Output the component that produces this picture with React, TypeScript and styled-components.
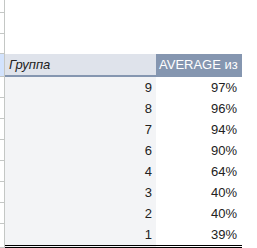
import styled, { createGlobalStyle } from 'styled-components';

const GlobalStyle = createGlobalStyle`
  html, body {
    margin: 0;
    padding: 0;
    background: #ffffff;
  }
  body {
    font-family: "Liberation Sans", Arial, sans-serif;
    font-size: 13px;
    color: #222222;
  }
`;

const Sheet = styled.div`
  display: flex;
  flex-direction: column;
  width: 257px;
  height: 248px;
  overflow: hidden;
`;

const Row = styled.div<{ $height: number }>`
  display: grid;
  grid-template-columns: 5px 151px 86px;
  height: ${(p) => p.$height}px;
`;

const RowHead = styled.div<{ $active?: boolean }>`
  box-sizing: border-box;
  border-right: 1px solid #c4c7c5;
  border-bottom: 1px solid #c4c7c5;
  background: ${(p) => (p.$active ? '#d3e3fd' : '#ffffff')};
`;

const HeaderCell = styled.div<{ $accent?: boolean }>`
  display: flex;
  align-items: center;
  padding: 0 3px;
  box-sizing: border-box;
  white-space: nowrap;
  overflow: hidden;
  border-bottom: 2px solid #8596b0;
  background: ${(p) => (p.$accent ? '#8596b0' : '#dfe3eb')};
  color: ${(p) => (p.$accent ? '#ffffff' : '#222222')};
  font-style: ${(p) => (p.$accent ? 'normal' : 'italic')};
  padding-left: ${(p) => (p.$accent ? '3px' : '4px')};
`;

const Cell = styled.div<{ $shade?: boolean; $last?: boolean }>`
  display: flex;
  align-items: center;
  justify-content: flex-end;
  padding-right: ${(p) => (p.$shade ? '4px' : '5px')};
  box-sizing: border-box;
  background: ${(p) => (p.$shade ? '#f3f4f6' : '#ffffff')};
  border-bottom: ${(p) => (p.$last ? '3px double #000000' : 'none')};
`;

const data = [
  [9, '97%'],
  [8, '96%'],
  [7, '94%'],
  [6, '90%'],
  [4, '64%'],
  [3, '40%'],
  [2, '40%'],
  [1, '39%'],
];

export default function App() {
  return (
    <>
      <GlobalStyle />
      <Sheet>
        <Row $height={13}>
          <RowHead />
        </Row>
        <Row $height={21}>
          <RowHead />
        </Row>
        <Row $height={20}>
          <RowHead />
        </Row>
        <Row $height={23}>
          <RowHead $active />
          <HeaderCell>Группа</HeaderCell>
          <HeaderCell $accent>AVERAGE из</HeaderCell>
        </Row>
        {data.map(([group, avg], i) => {
          const last = i === data.length - 1;
          return (
            <Row key={i} $height={last ? 24 : 21}>
              <RowHead />
              <Cell $shade $last={last}>{group}</Cell>
              <Cell $last={last}>{avg}</Cell>
            </Row>
          );
        })}
      </Sheet>
    </>
  );
}
